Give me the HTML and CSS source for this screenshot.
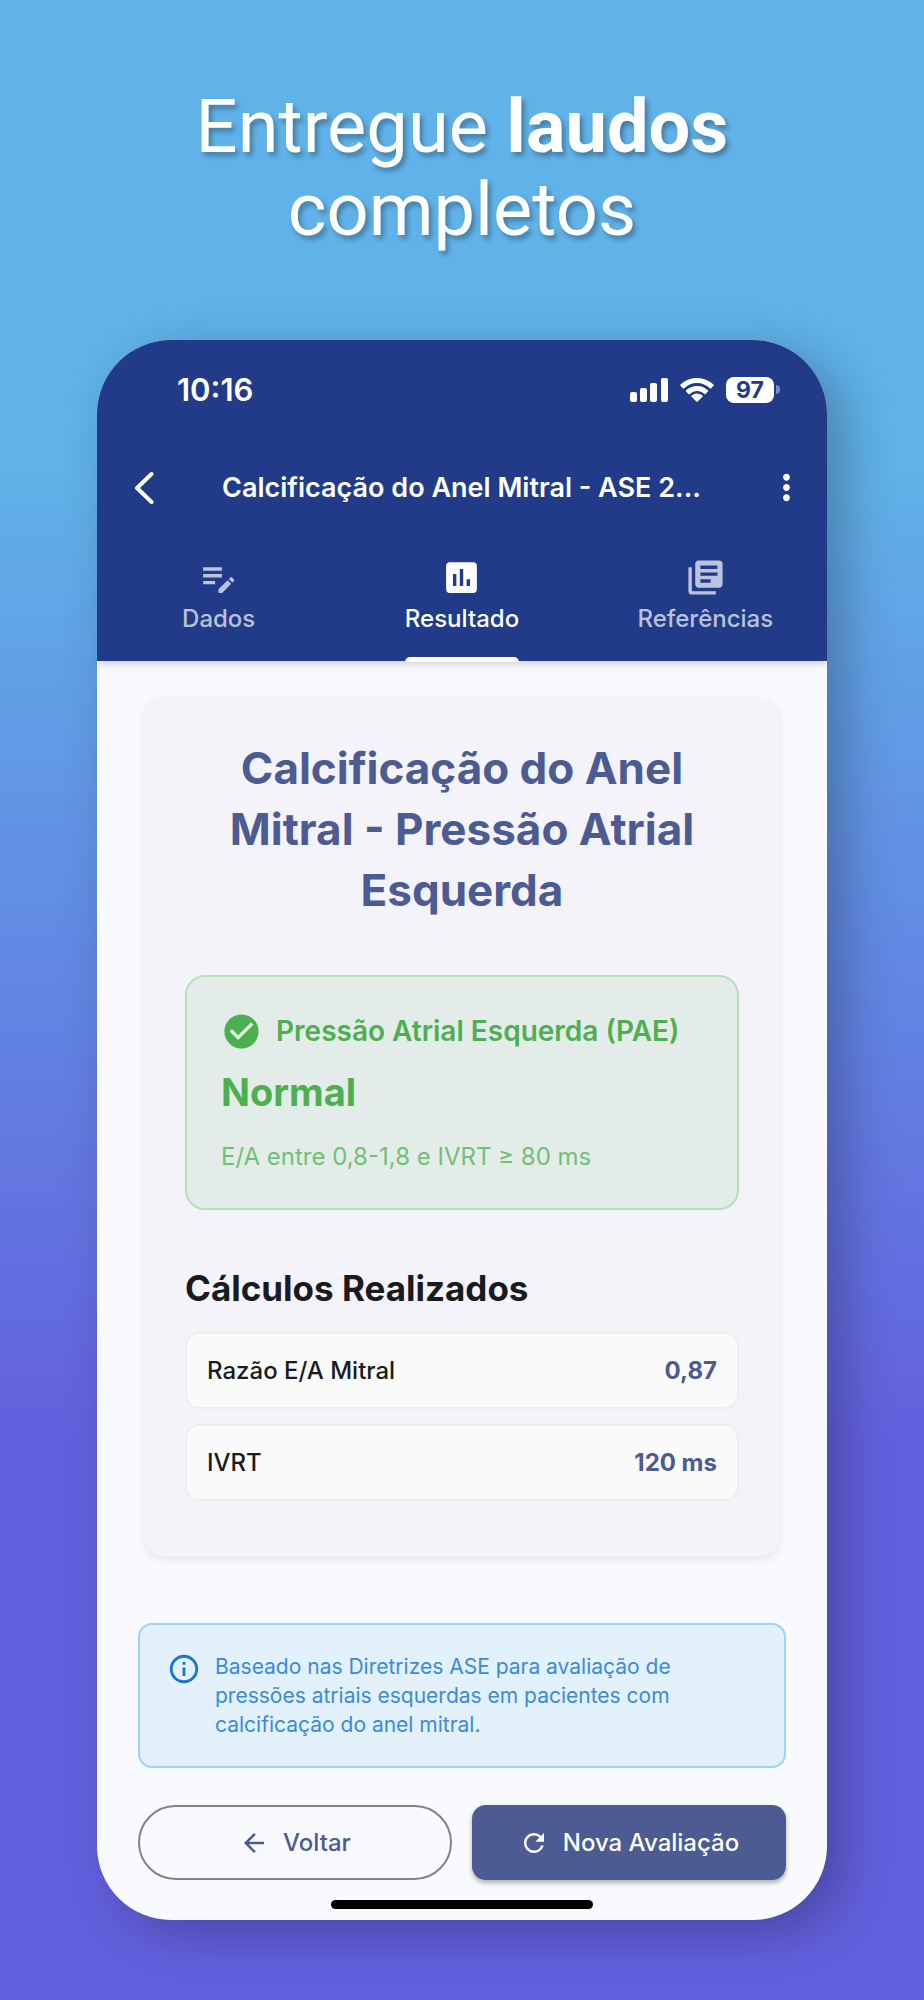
FILE: index.html
```html
<!DOCTYPE html>
<html lang="pt-BR">
<head>
  <meta charset="UTF-8" />
  <meta name="viewport" content="width=device-width, initial-scale=1.0"/>
  <title>Entregue laudos completos</title>
  <link rel="stylesheet" href="styles.css">
</head>
<body>

<h1 class="headline">Entregue <strong>laudos</strong><br>completos</h1>

<main class="phone">
  <header class="app-header">
    <div class="status-bar">
      <span class="clock">10:16</span>
      <div class="status-icons">
        <svg class="signal" viewBox="0 0 38 24" aria-hidden="true">
          <rect x="0" y="14" width="7" height="10" rx="2"/>
          <rect x="10" y="10" width="7" height="14" rx="2"/>
          <rect x="20" y="5" width="7" height="19" rx="2"/>
          <rect x="31" y="0" width="7" height="24" rx="2"/>
        </svg>
        <svg class="wifi" viewBox="0 0 34 24" aria-hidden="true">
          <path d="M17 0C10.600 0 4.800 2.500.600 6.600a.9.900 0 0 0 0 1.300l2.300 2.300a.9.900 0 0 0 1.300 0A18.300 18.300 0 0 1 17 5c5 0 9.500 2 12.800 5.200a.9.900 0 0 0 1.300 0l2.300-2.300a.9.900 0 0 0 0-1.300A23.500 23.500 0 0 0 17 0z"/>
          <path d="M17 8c-4.200 0-8 1.600-10.900 4.300a.9.900 0 0 0 0 1.300l2.300 2.300a.9.900 0 0 0 1.300 0A10.800 10.800 0 0 1 17 13c2.800 0 5.400 1.100 7.300 2.900a.9.900 0 0 0 1.300 0l2.300-2.300a.9.900 0 0 0 0-1.300A15.800 15.800 0 0 0 17 8z"/>
          <path d="M17 15.500c-2 0-3.900.8-5.300 2a.9.900 0 0 0 0 1.400l4.600 4.600a1 1 0 0 0 1.400 0l4.600-4.600a.9.900 0 0 0 0-1.400 8 8 0 0 0-5.300-2z"/>
        </svg>
        <div class="battery"><span class="battery-level">97</span></div>
      </div>
    </div>

    <div class="app-bar">
      <button class="icon-button" type="button" aria-label="Voltar">
        <svg class="back-icon" viewBox="0 0 20 34" aria-hidden="true"><path d="M17.500 3 3 17l14.500 14"/></svg>
      </button>
      <h2 class="app-title">Calcificação do Anel Mitral - ASE 2...</h2>
      <button class="icon-button" type="button" aria-label="Mais opções">
        <svg class="icon" viewBox="0 0 24 24" aria-hidden="true"><path d="M12 8c1.100 0 2-.9 2-2s-.9-2-2-2-2 .9-2 2 .9 2 2 2zm0 2c-1.100 0-2 .9-2 2s.9 2 2 2 2-.9 2-2-.9-2-2-2zm0 6c-1.100 0-2 .9-2 2s.9 2 2 2 2-.9 2-2-.9-2-2-2z"/></svg>
      </button>
    </div>

    <nav class="tabs">
      <button class="tab" type="button">
        <svg class="icon" viewBox="0 0 24 24" aria-hidden="true"><path d="M3 10h11v2H3v-2zm0-2h11V6H3v2zm0 8h7v-2H3v2zm15.010-3.130.71-.71c.39-.39 1.020-.39 1.410 0l.71.71c.39.39.39 1.020 0 1.410l-.71.71-2.120-2.120zm-.71.71-5.300 5.300V21h2.120l5.300-5.300-2.120-2.120z"/></svg>
        <span class="tab-label">Dados</span>
      </button>
      <button class="tab active" type="button">
        <svg class="icon" viewBox="0 0 24 24" aria-hidden="true"><path d="M19 3H5c-1.100 0-2 .9-2 2v14c0 1.100.9 2 2 2h14c1.100 0 2-.9 2-2V5c0-1.100-.9-2-2-2zM9 17H7v-7h2v7zm4 0h-2V7h2v10zm4 0h-2v-4h2v4z"/></svg>
        <span class="tab-label">Resultado</span>
      </button>
      <button class="tab" type="button">
        <svg class="icon" viewBox="0 0 24 24" aria-hidden="true"><path d="M4 6H2v14c0 1.100.9 2 2 2h14v-2H4V6zm16-4H8c-1.100 0-2 .9-2 2v12c0 1.100.9 2 2 2h12c1.100 0 2-.9 2-2V4c0-1.100-.9-2-2-2zm-1 5H9V5h10v2zm0 4H9V9h10v2zm-4 4H9v-2h6v2z"/></svg>
        <span class="tab-label">Referências</span>
      </button>
    </nav>
  </header>

  <div class="content">
    <section class="card">
      <h2 class="card-title">Calcificação do Anel Mitral - Pressão Atrial Esquerda</h2>

      <div class="result">
        <div class="result-header">
          <svg class="icon" viewBox="0 0 24 24" aria-hidden="true"><path d="M12 2C6.480 2 2 6.480 2 12s4.480 10 10 10 10-4.480 10-10S17.520 2 12 2zm-2 15-5-5 1.410-1.410L10 14.170l7.590-7.590L19 8l-9 9z"/></svg>
          <h3 class="result-name">Pressão Atrial Esquerda (PAE)</h3>
        </div>
        <p class="result-value">Normal</p>
        <p class="result-detail">E/A entre 0,8-1,8 e IVRT ≥ 80 ms</p>
      </div>

      <h3 class="section-title">Cálculos Realizados</h3>
      <dl class="calculations">
        <div class="calculation">
          <dt>Razão E/A Mitral</dt>
          <dd>0,87</dd>
        </div>
        <div class="calculation">
          <dt>IVRT</dt>
          <dd>120 ms</dd>
        </div>
      </dl>
    </section>

    <aside class="info">
      <svg class="info-icon" viewBox="0 0 24 24" aria-hidden="true"><path d="M11 7h2v2h-2zm0 4h2v6h-2zm1-9C6.480 2 2 6.480 2 12s4.480 10 10 10 10-4.480 10-10S17.520 2 12 2zm0 18c-4.410 0-8-3.590-8-8s3.590-8 8-8 8 3.590 8 8-3.590 8-8 8z"/></svg>
      <p>Baseado nas Diretrizes ASE para avaliação de pressões atriais esquerdas em pacientes com calcificação do anel mitral.</p>
    </aside>

    <div class="actions">
      <button class="button outlined" type="button">
        <svg class="button-icon" viewBox="0 0 24 24" aria-hidden="true"><path d="M20 11H7.830l5.590-5.590L12 4l-8 8 8 8 1.410-1.410L7.830 13H20v-2z"/></svg>
        Voltar
      </button>
      <button class="button filled" type="button">
        <svg class="button-icon" viewBox="0 0 24 24" aria-hidden="true"><path d="M17.650 6.350A7.958 7.958 0 0 0 12 4c-4.420 0-7.990 3.580-7.990 8s3.570 8 7.990 8c3.730 0 6.840-2.550 7.730-6h-2.080A5.990 5.990 0 0 1 12 18c-3.310 0-6-2.690-6-6s2.690-6 6-6c1.660 0 3.140.69 4.220 1.780L13 11h7V4l-2.350 2.350z"/></svg>
        Nova Avaliação
      </button>
    </div>

    <div class="home-indicator"></div>
  </div>
</main>

</body>
</html>
```

FILE: styles.css
```css
* {
  box-sizing: border-box;
  margin: 0;
  padding: 0;
}

body {
  min-height: 100vh;
  padding: 85px 0 80px;
  background: linear-gradient(180deg, #60b2e8 23%, #6360de 72%);
  font-family: Inter, "Liberation Sans", sans-serif;
  color: #1a1b21;
}

button {
  border: none;
  background: none;
  font-family: inherit;
  cursor: pointer;
}

svg {
  fill: currentColor;
  flex-shrink: 0;
}

.headline {
  margin-bottom: 89px;
  font-family: Roboto, sans-serif;
  font-size: 74px;
  font-weight: 400;
  line-height: 83px;
  text-align: center;
  color: #fff;
  text-shadow: 3px 4px 5px rgba(0, 0, 0, 0.3);
}

.headline strong {
  font-weight: 700;
}

.phone {
  width: 79%;
  margin: 0 auto;
  border-radius: 74px;
  background: #f9fafd;
  box-shadow: 18px 14px 50px rgba(0, 0, 0, 0.26);
  overflow: hidden;
}

/* header */

.app-header {
  position: relative;
  background: #213b89;
  color: #fff;
  box-shadow: 0 2px 8px rgba(0, 0, 0, 0.2);
}

.status-bar {
  display: flex;
  align-items: center;
  justify-content: space-between;
  height: 99px;
  padding: 0 47px 0 80px;
}

.clock {
  font-size: 31px;
  font-weight: 600;
}

.status-icons {
  display: flex;
  align-items: center;
  gap: 12px;
}

.signal {
  width: 38px;
  height: 24px;
}

.wifi {
  width: 34px;
  height: 24px;
}

.battery {
  display: flex;
  align-items: center;
  gap: 2px;
}

.battery::after {
  content: "";
  width: 4px;
  height: 9px;
  border-radius: 0 4px 4px 0;
  background: rgba(255, 255, 255, 0.4);
}

.battery-level {
  width: 48px;
  border-radius: 8px;
  background: #fff;
  font-size: 23px;
  font-weight: 700;
  line-height: 26px;
  text-align: center;
  color: #213b89;
}

.app-bar {
  display: flex;
  align-items: center;
  height: 97px;
  padding: 0 13px 0 20px;
}

.icon-button {
  display: flex;
  align-items: center;
  justify-content: center;
  width: 54px;
  height: 54px;
  color: #fff;
}

.icon {
  width: 41px;
  height: 41px;
}

.back-icon {
  width: 20px;
  height: 34px;
  fill: none;
  stroke: currentColor;
  stroke-width: 4;
  stroke-linecap: round;
  stroke-linejoin: round;
}

.app-title {
  flex: 1;
  padding-right: 8px;
  font-size: 27px;
  font-weight: 600;
  text-align: center;
  white-space: nowrap;
}

.tabs {
  display: grid;
  grid-template-columns: repeat(3, 1fr);
  height: 125px;
}

.tab {
  display: flex;
  flex-direction: column;
  align-items: center;
  gap: 7px;
  padding-top: 21px;
  color: rgba(255, 255, 255, 0.7);
}

.tab-label {
  flex: 1;
  font-size: 24px;
  font-weight: 500;
  line-height: 28px;
}

.tab.active {
  color: #fff;
}

.tab.active .tab-label::after {
  content: "";
  display: block;
  height: 5px;
  margin-top: 24px;
  border-radius: 5px 5px 0 0;
  background: #fff;
}

/* content */

.content {
  padding: 36px 41px 11px;
}

.card {
  margin: 0 6px 67px;
  padding: 41px 41px 55px;
  border-radius: 20px;
  background: #f4f3fa;
  box-shadow: 0 4px 8px rgba(0, 0, 0, 0.08);
}

.card-title {
  margin-bottom: 54px;
  font-size: 44px;
  font-weight: 700;
  line-height: 61px;
  text-align: center;
  color: #4c5b92;
}

.result {
  margin-bottom: 55px;
  padding: 34px 34px 33px;
  border: 2px solid #b8dfbc;
  border-radius: 20px;
  background: #e4ece9;
  color: #4caf50;
}

.result-header {
  display: flex;
  align-items: center;
  gap: 14px;
  margin-bottom: 15px;
}

.result-name {
  font-size: 28px;
  font-weight: 600;
  line-height: 41px;
  white-space: nowrap;
}

.result-value {
  margin-bottom: 22px;
  font-size: 38px;
  font-weight: 700;
  line-height: 50px;
}

.result-detail {
  font-size: 24px;
  line-height: 36px;
  color: #72c076;
}

.section-title {
  margin-bottom: 21px;
  font-size: 35px;
  font-weight: 700;
  line-height: 46px;
}

.calculations {
  display: flex;
  flex-direction: column;
  gap: 15px;
}

.calculation {
  display: flex;
  align-items: center;
  justify-content: space-between;
  height: 77px;
  padding: 0 20px;
  border: 2px solid #eeeef1;
  border-radius: 14px;
  background: #fafafa;
  font-size: 24px;
}

.calculation dt {
  font-weight: 500;
}

.calculation dd {
  font-weight: 700;
  color: #4c5b92;
}

.info {
  display: flex;
  gap: 14px;
  margin-bottom: 37px;
  padding: 27px;
  border: 2px solid #9fd1f9;
  border-radius: 14px;
  background: #e3f1fd;
  font-size: 21px;
  line-height: 29px;
  color: #3a8bdb;
}

.info-icon {
  width: 34px;
  height: 34px;
  color: #1976d2;
}

.actions {
  display: grid;
  grid-template-columns: 1fr 1fr;
  gap: 20px;
  margin-bottom: 20px;
}

.button {
  display: flex;
  align-items: center;
  justify-content: center;
  gap: 14px;
  height: 75px;
  font-size: 24px;
  font-weight: 500;
  white-space: nowrap;
}

.outlined {
  border: 2px solid #80818a;
  border-radius: 38px;
  color: #4c5b92;
}

.filled {
  border-radius: 14px;
  background: #4c5b92;
  color: #fff;
  box-shadow: 0 3px 5px rgba(0, 0, 0, 0.3);
}

.button-icon {
  width: 30px;
  height: 30px;
}

.home-indicator {
  width: 262px;
  height: 9px;
  margin: 0 auto;
  border-radius: 5px;
  background: #000;
}
```
